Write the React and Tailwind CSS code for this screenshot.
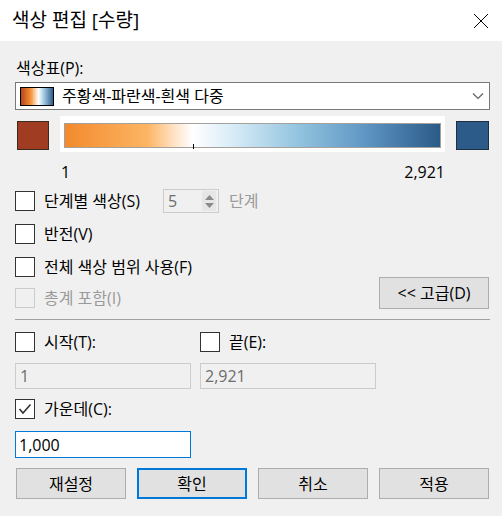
import { useState } from "react";

const FONT = "font-['Open_Sans','Noto_Sans_CJK_KR',sans-serif]";

function CheckBox({ label, checked = false, disabled = false }) {
    return (
        <div className="flex items-center h-[20px]">
            <div
                className={`w-[20px] h-[20px] border flex items-center justify-center ${
                    disabled ? "border-[#cccccc] bg-[#f0f0f0]" : "border-[#333333] bg-white"
                }`}
            >
                {checked && (
                    <svg width="14" height="14" viewBox="0 0 14 14">
                        <polyline points="1.5,7 5,11 12.5,2.5" fill="none" stroke="#333" strokeWidth="1.6" />
                    </svg>
                )}
            </div>
            <span className={`ml-[9px] text-[16px] leading-[20px] ${disabled ? "text-[#9a9a9a]" : "text-black"}`}>
                {label}
            </span>
        </div>
    );
}

function Button({ children, primary = false }) {
    return (
        <button
            className={`w-[110px] h-[31px] bg-[#e1e1e1] text-[16px] text-black flex items-center justify-center ${
                primary ? "border-2 border-[#0078d7]" : "border border-[#adadad]"
            }`}
        >
            {children}
        </button>
    );
}

export default function App() {
    const [center, setCenter] = useState("1,000");

    return (
        <div className={`w-[502px] h-[516px] bg-[#f0f0f0] ${FONT} overflow-hidden`}>
            {/* Title bar */}
            <div className="h-[41px] bg-white flex items-center justify-between pl-[12px] pr-[13px]">
                <span className="text-[19px] leading-none text-black">색상 편집 [수량]</span>
                <svg width="16" height="16" viewBox="0 0 16 16">
                    <path d="M1 1 L15 15 M15 1 L1 15" stroke="#000" strokeWidth="1" />
                </svg>
            </div>

            <div className="pl-[15px] pr-[12px]">
                <div className="mt-[17px] h-[20px] text-[16px] leading-[20px] pl-[1px]">색상표(P):</div>

                {/* Palette dropdown */}
                <div className="mt-[4px] h-[28px] border border-[#7a7a7a] bg-white flex items-center pl-[4px] pr-[5px]">
                    <div className="w-[34px] h-[19px] border border-black bg-[linear-gradient(to_right,#b3471b,#f39035_30%,#fde3c8_48%,#ffffff_55%,#a9cfe6_70%,#2d5e8c)]" />
                    <span className="ml-[8px] text-[16px] leading-none">주황색-파란색-흰색 다중</span>
                    <svg className="ml-auto" width="12" height="8" viewBox="0 0 12 8">
                        <polyline points="1,1.5 6,6.5 11,1.5" fill="none" stroke="#606060" strokeWidth="1.2" />
                    </svg>
                </div>

                {/* Gradient row */}
                <div className="mt-[6px] flex items-start">
                    <div className="mt-[5px] ml-[2px] w-[32px] h-[29px] bg-[#a03c22] border border-[#3a2a20]" />
                    <div className="ml-[11px] w-[385px] h-[36px] bg-white pt-[7px] px-[4px]">
                        <div className="relative h-[25px] border border-[#a5a09a] bg-[linear-gradient(to_right,#f28a2d,#fdb564_22%,#ffe8d2_30%,#ffffff_34%,#d7ebf7_45%,#93c4df_62%,#5f96c4_80%,#2b5a88)]">
                            <div className="absolute left-[128px] bottom-[-2px] w-px h-[5px] bg-black" />
                        </div>
                    </div>
                    <div className="mt-[5px] ml-[11px] w-[33px] h-[29px] bg-[#2c5b8a] border border-[#1f2f40]" />
                </div>

                <div className="mt-[10px] ml-[46px] w-[384px] h-[20px] flex justify-between text-[16px] leading-[20px]">
                    <span>1</span>
                    <span>2,921</span>
                </div>

                {/* Stepped color */}
                <div className="mt-[7px] h-[24px] flex items-center">
                    <div className="w-[148px]">
                        <CheckBox label="단계별 색상(S)" />
                    </div>
                    <div className="w-[56px] h-[24px] border border-[#cccccc] flex items-center pl-[4px] pr-[2px]">
                        <span className="text-[16px] text-[#6d6d6d] leading-none">5</span>
                        <div className="ml-auto w-[14px] h-[20px] bg-[#e6e6e6] flex flex-col items-center justify-center gap-[3px]">
                            <svg width="9" height="5" viewBox="0 0 9 5">
                                <polygon points="0,5 4.5,0 9,5" fill="#8a8a8a" />
                            </svg>
                            <svg width="9" height="5" viewBox="0 0 9 5">
                                <polygon points="0,0 4.5,5 9,0" fill="#8a8a8a" />
                            </svg>
                        </div>
                    </div>
                    <span className="ml-[10px] text-[16px] text-[#9a9a9a] leading-none">단계</span>
                </div>

                <div className="mt-[11px]">
                    <CheckBox label="반전(V)" />
                </div>
                <div className="mt-[13px]">
                    <CheckBox label="전체 색상 범위 사용(F)" />
                </div>
                <div className="h-[32px] flex items-end justify-between pr-px">
                    <div className="mb-px">
                        <CheckBox label="총계 포함(I)" disabled />
                    </div>
                    <button className="w-[110px] h-[32px] bg-[#e1e1e1] border border-[#adadad] text-[16px] flex items-center justify-center">
                        &lt;&lt; 고급(D)
                    </button>
                </div>

                <div className="mt-[10px] h-px bg-[#a0a0a0]" />

                {/* Start / end */}
                <div className="mt-[12px] flex">
                    <div className="w-[185px]">
                        <CheckBox label="시작(T):" />
                    </div>
                    <CheckBox label="끝(E):" />
                </div>
                <div className="mt-[11px] flex gap-[9px]">
                    <div className="w-[176px] h-[26px] border border-[#cccccc] flex items-center pl-[4px] text-[16px] text-[#6d6d6d]">1</div>
                    <div className="w-[176px] h-[26px] border border-[#cccccc] flex items-center pl-[4px] text-[16px] text-[#6d6d6d]">2,921</div>
                </div>

                <div className="mt-[10px]">
                    <CheckBox label="가운데(C):" checked />
                </div>
                <input
                    value={center}
                    onChange={(e) => setCenter(e.target.value)}
                    className="mt-[12px] block w-[176px] h-[27px] border border-[#0078d7] bg-white pl-[3px] text-[16px] text-black outline-none"
                />

                {/* Buttons */}
                <div className="mt-[10px] flex gap-[11px] pl-px">
                    <Button>재설정</Button>
                    <Button primary>확인</Button>
                    <Button>취소</Button>
                    <Button>적용</Button>
                </div>
            </div>
        </div>
    );
}
